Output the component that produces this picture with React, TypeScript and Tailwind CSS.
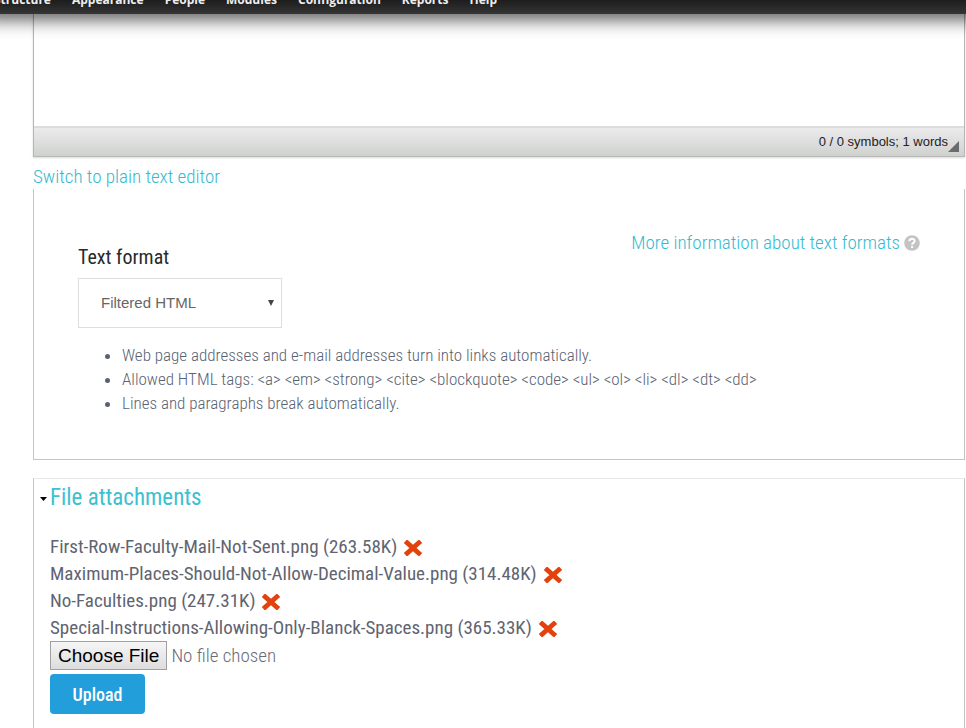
import { useState } from 'react'

const menuItems = ['Structure', 'Appearance', 'People', 'Modules', 'Configuration', 'Reports', 'Help']

const tips = [
  'Web page addresses and e-mail addresses turn into links automatically.',
  'Allowed HTML tags: <a> <em> <strong> <cite> <blockquote> <code> <ul> <ol> <li> <dl> <dt> <dd>',
  'Lines and paragraphs break automatically.',
]

const attachments = [
  { name: 'First-Row-Faculty-Mail-Not-Sent.png', size: '263.58K' },
  { name: 'Maximum-Places-Should-Not-Allow-Decimal-Value.png', size: '314.48K' },
  { name: 'No-Faculties.png', size: '247.31K' },
  { name: 'Special-Instructions-Allowing-Only-Blanck-Spaces.png', size: '365.33K' },
]

function AdminMenu() {
  return (
    <nav className="relative z-10 -mx-5 flex h-[14px] items-end bg-linear-to-b from-[#1d1d1d] to-[#353535] px-5 shadow-[0_2px_20px_#000]">
      <ul className="-ml-[6px] flex h-[14px] items-end gap-[21px] overflow-hidden pb-[5px] font-['Open_Sans',sans-serif] text-[12px] leading-[18px] font-bold text-[#eee]">
        {menuItems.map((item) => (
          <li key={item}>
            <a href="#">{item}</a>
          </li>
        ))}
      </ul>
    </nav>
  )
}

function Editor() {
  const [text, setText] = useState('')

  return (
    <div className="border border-t-0 border-[#b6b6b6] shadow-[0_1px_2px_rgba(0,0,0,0.15)]">
      <textarea
        aria-label="Body"
        value={text}
        onChange={(e) => setText(e.target.value)}
        className="block h-28 w-full resize-none bg-white outline-none"
      />
      <div className="flex h-[30px] items-center justify-end border-t-2 border-[#dcdcdc] bg-linear-to-b from-[#ebebeb] to-[#cfd1cf] pr-[5px] font-['Liberation_Sans',sans-serif] text-[13px] text-[#222]">
        <span>0 / 0 symbols; 1 words</span>
        <svg viewBox="0 0 10 10" className="mb-1 h-[11px] w-[11px] self-end" aria-hidden="true">
          <path d="M10 0V10H0Z" fill="#6b6b6b" />
        </svg>
      </div>
    </div>
  )
}

function TextFormat() {
  return (
    <section className="border border-t-0 border-[#c4c4c4] px-11 pt-[42px] pb-11">
      <div className="flex items-start justify-between">
        <div>
          <label htmlFor="format" className="block pt-[13px] text-xl leading-[26px] text-[#2a2a2a]">
            Text format
          </label>
          <div className="relative mt-2 w-[204px]">
            <select
              id="format"
              className="h-[50px] w-full appearance-none border border-[#dedede] bg-white pl-[22px] font-['Liberation_Sans',sans-serif] text-[15px] text-[#666]"
            >
              <option>Filtered HTML</option>
              <option>Full HTML</option>
              <option>Plain text</option>
            </select>
            <svg viewBox="0 0 6 6" className="pointer-events-none absolute top-[22px] right-2 size-[6px]" aria-hidden="true">
              <path d="M0 0H6L3 6Z" fill="#444" />
            </svg>
          </div>
        </div>
        <a href="#" className="flex items-center gap-1 text-[19px] leading-6 font-light text-[#35b9cf]">
          More information about text formats
          <svg viewBox="0 0 16 16" className="size-4" aria-hidden="true">
            <circle cx="8" cy="8" r="7.8" fill="#c3c3c3" />
            <path d="M5.4 6.3C5.4 2.9 10.7 3 10.6 6.1C10.6 7.9 8.2 7.9 8.1 9.8" fill="none" stroke="#fff" strokeWidth="2" />
            <rect x="7" y="11" width="2.1" height="2" fill="#fff" />
          </svg>
        </a>
      </div>
      <ul className="mt-[15px] list-disc pl-11 text-[17px] leading-6 font-light text-[#5a6372]">
        {tips.map((tip) => (
          <li key={tip}>{tip}</li>
        ))}
      </ul>
    </section>
  )
}

function FileAttachments() {
  const [files, setFiles] = useState(attachments)

  return (
    <section className="mt-[18px] min-h-[260px] border-x border-t border-x-[#c4c4c4] border-t-[#e8e8e8] px-4">
      <h2>
        <a href="#" className="-ml-[10px] flex items-center gap-[3px] pt-[5px] text-[23px] leading-7 text-[#3dc0d0]">
          <svg viewBox="0 0 7 4" className="mt-[2px] h-1 w-[7px]" aria-hidden="true">
            <path d="M0 0H7L3.5 4Z" fill="#000" />
          </svg>
          File attachments
        </a>
      </h2>
      <ul className="mt-[21px] text-[19px] leading-[27px] text-[#5f6470]">
        {files.map((file) => (
          <li key={file.name} className="flex items-center gap-[7px]">
            <span>
              {file.name} ({file.size})
            </span>
            <button aria-label={`Remove ${file.name}`} onClick={() => setFiles(files.filter((f) => f !== file))}>
              <svg viewBox="0 0 18 16" className="mt-[2px] h-4 w-[18px]" aria-hidden="true">
                <path d="M3.2 2.8L14.8 13.2M14.8 2.8L3.2 13.2" stroke="#e2430d" strokeWidth="4.8" strokeLinecap="square" strokeLinejoin="round" />
              </svg>
            </button>
          </li>
        ))}
      </ul>
      <input
        type="file"
        aria-label="Add a new file"
        className="block w-full text-[19px] leading-6 font-light text-[#6b6b78] file:mr-1 file:h-[29px] file:border file:border-solid file:border-[#a0a0a0] file:bg-linear-to-b file:from-[#f6f6f6] file:to-[#dddddd] file:px-[7px] file:font-['Liberation_Sans',sans-serif] file:text-[19px] file:font-normal file:text-black"
      />
      <button className="mt-1 h-10 w-[95px] rounded-[4px] bg-[#229edb] pt-[2px] text-lg font-medium text-white">Upload</button>
    </section>
  )
}

export default function App() {
  return (
    <div className="min-h-screen overflow-hidden bg-white font-['Roboto_Condensed','Liberation_Sans_Narrow',Roboto,sans-serif]">
      <AdminMenu />
      <main className="-mb-10 pr-px pl-[33px]">
        <Editor />
        <a href="#" className="block pt-2 text-[19px] leading-6 font-light text-[#35b9cf]">
          Switch to plain text editor
        </a>
        <TextFormat />
        <FileAttachments />
      </main>
    </div>
  )
}
